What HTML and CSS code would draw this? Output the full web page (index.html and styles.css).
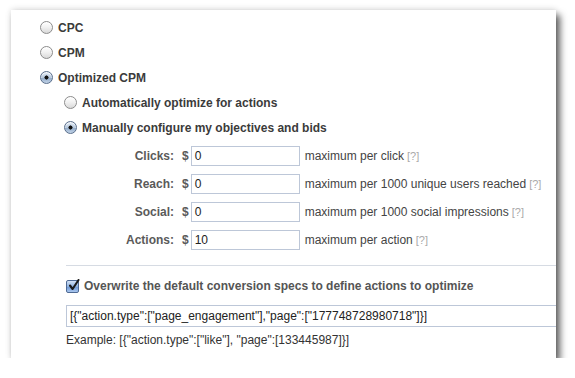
FILE: index.html
```html
<!DOCTYPE html>
<html>
<head>
<meta charset="utf-8">
<link rel="stylesheet" href="styles.css">
</head>
<body>
<div class="panel">
  <div class="options">
    <div class="row"><span class="radio"></span><span class="opt-label">CPC</span></div>
    <div class="row"><span class="radio"></span><span class="opt-label">CPM</span></div>
    <div class="row"><span class="radio checked"></span><span class="opt-label">Optimized CPM</span></div>
    <div class="sub">
      <div class="row"><span class="radio"></span><span class="opt-label">Automatically optimize for actions</span></div>
      <div class="row"><span class="radio checked"></span><span class="opt-label">Manually configure my objectives and bids</span></div>
      <div class="bids">
        <div class="bid-row"><span class="bid-label">Clicks:</span><span class="cur">$</span><span class="field">0</span><span class="desc">maximum per click</span><span class="help">[?]</span></div>
        <div class="bid-row"><span class="bid-label">Reach:</span><span class="cur">$</span><span class="field">0</span><span class="desc">maximum per 1000 unique users reached</span><span class="help">[?]</span></div>
        <div class="bid-row"><span class="bid-label">Social:</span><span class="cur">$</span><span class="field">0</span><span class="desc">maximum per 1000 social impressions</span><span class="help">[?]</span></div>
        <div class="bid-row"><span class="bid-label">Actions:</span><span class="cur">$</span><span class="field">10</span><span class="desc">maximum per action</span><span class="help">[?]</span></div>
      </div>
    </div>
    <div class="divider"></div>
    <div class="check-row">
      <span class="checkbox"><svg width="13" height="13" viewBox="0 0 13 13"><path d="M3 6.5 L5.6 10 L11.5 1" fill="none" stroke="#1a1a1a" stroke-width="2.1" stroke-linecap="round" stroke-linejoin="round"/></svg></span>
      <span class="check-label">Overwrite the default conversion specs to define actions to optimize</span>
    </div>
    <div class="spec-field">[{"action.type":["page_engagement"],"page":["177748728980718"]}]</div>
    <div class="example">Example: [{"action.type":["like"], "page":[133445987]}]</div>
  </div>
</div>
</body>
</html>
```

FILE: styles.css
```css
html, body {
  margin: 0;
  padding: 0;
  background: #fff;
}
body {
  font-family: "Liberation Sans", Arial, sans-serif;
  font-size: 12px;
  color: #333;
  padding: 10px 0 0 11px;
}
.panel {
  width: 545px;
  height: 348px;
  background: #fff;
  overflow: hidden;
  box-shadow: 0 -1px 6px rgba(0, 0, 0, 0.12), 4px 5px 7px rgba(0, 0, 0, 0.62);
}
.options {
  padding: 5px 0 0 29px;
}
.row {
  height: 25px;
  display: flex;
  align-items: center;
}
.radio {
  width: 13px;
  height: 13px;
  box-sizing: border-box;
  border-radius: 50%;
  border: 1px solid #8c8c8c;
  background: linear-gradient(#ffffff, #f2f2f2 45%, #d9d9d9);
  box-shadow: inset 0 1px 1px rgba(255,255,255,0.9);
  flex: none;
}
.radio.checked {
  border-color: #5a6f8c;
  background:
    radial-gradient(circle at 50% 50%, #111 0, #111 1.8px, transparent 2.3px),
    linear-gradient(#e3ebf5, #b7c9de 50%, #8fa8c6 52%, #c2d3e8);
}
.opt-label {
  margin-left: 5px;
  font-weight: bold;
  color: #3b3b3b;
}
.sub {
  padding-left: 24px;
}
.bids {
  margin-top: 2px;
}
.bid-row {
  height: 28px;
  display: flex;
  align-items: center;
}
.bid-label {
  width: 110px;
  text-align: right;
  font-weight: bold;
  color: #5a5a5a;
  flex: none;
}
.cur {
  margin-left: 8px;
  font-weight: bold;
  color: #5a5a5a;
}
.field {
  margin-left: 2px;
  width: 109px;
  height: 20px;
  box-sizing: border-box;
  border: 1px solid #bdc7d8;
  padding: 0 3px;
  line-height: 18px;
  color: #222;
  flex: none;
}
.desc {
  margin-left: 5px;
  color: #444;
}
.help {
  margin-left: 3px;
  color: #aaa;
  font-size: 11px;
}
.divider {
  margin: 11px 0 0 26px;
  height: 1px;
  background: #d6dbe3;
}
.check-row {
  margin: 7px 0 0 26px;
  height: 26px;
  display: flex;
  align-items: center;
}
.checkbox {
  width: 13px;
  height: 13px;
  box-sizing: border-box;
  border: 1px solid #4f6a94;
  border-radius: 2px;
  background: linear-gradient(#d5e3f6, #8fb2e0 50%, #6d97d3 52%, #a9c6ee);
  display: flex;
  flex: none;
  overflow: visible;
}
.checkbox svg {
  margin: -2px 0 0 0;
  overflow: visible;
}
.check-label {
  margin-left: 5px;
  font-weight: bold;
  color: #555;
}
.spec-field {
  margin: 6px 0 0 26px;
  width: 520px;
  height: 22px;
  box-sizing: border-box;
  border: 1px solid #bdc7d8;
  padding: 0 3px;
  line-height: 20px;
  white-space: nowrap;
  color: #222;
}
.example {
  margin: 6px 0 0 26px;
  line-height: 14px;
  color: #333;
}
```
